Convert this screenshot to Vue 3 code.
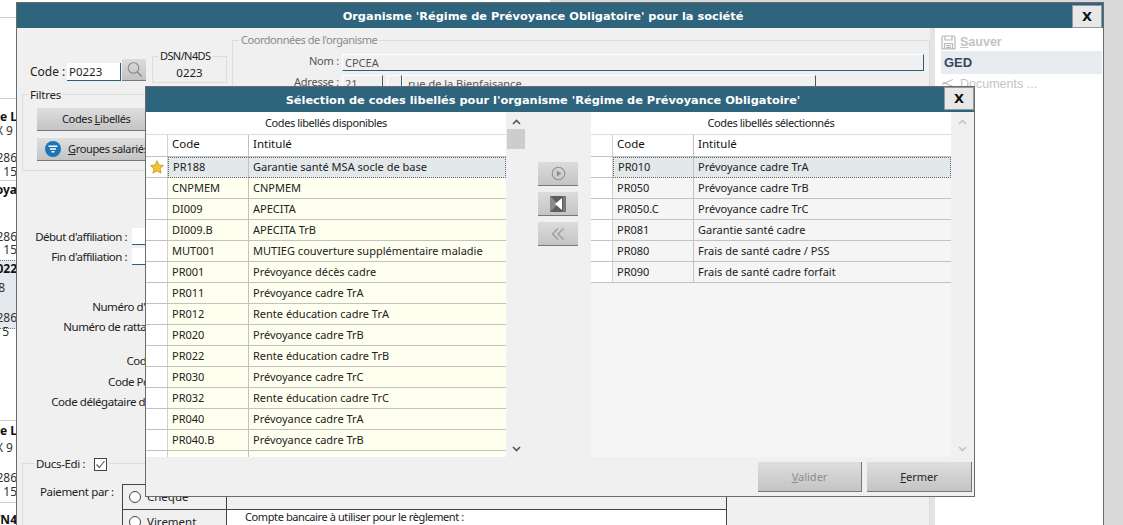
<script setup>
const strip = [
  { t: 98, h: 82, lines: [['de L', 116, 1], ['X 9', 130, 0, 4], ['286', 157], ['15', 171]] },
  { t: 180, h: 80, lines: [['oya', 189, 1], ['286', 236], ['15', 249]] },
  { t: 260, h: 69, sel: true, lines: [['022', 268, 1], ['8', 287, 0, 12], ['286', 317], ['15', 331, 0, 8]] },
  { t: 420, h: 82, lines: [['de L', 430, 1], ['X 9', 447, 0, 4], ['286', 477], ['15', 491]] },
  { t: 502, h: 23, lines: [['/N4', 519, 1]] }
]
const leftRows = [
  ['PR188', 'Garantie santé MSA socle de base'],
  ['CNPMEM', 'CNPMEM'],
  ['DI009', 'APECITA'],
  ['DI009.B', 'APECITA TrB'],
  ['MUT001', 'MUTIEG couverture supplémentaire maladie'],
  ['PR001', 'Prévoyance décès cadre'],
  ['PR011', 'Prévoyance cadre TrA'],
  ['PR012', 'Rente éducation cadre TrA'],
  ['PR020', 'Prévoyance cadre TrB'],
  ['PR022', 'Rente éducation cadre TrB'],
  ['PR030', 'Prévoyance cadre TrC'],
  ['PR032', 'Rente éducation cadre TrC'],
  ['PR040', 'Prévoyance cadre TrA'],
  ['PR040.B', 'Prévoyance cadre TrB'],
  ['PR042', 'Rente éducation cadre TrA']
]
const rightRows = [
  ['PR010', 'Prévoyance cadre TrA'],
  ['PR050', 'Prévoyance cadre TrB'],
  ['PR050.C', 'Prévoyance cadre TrC'],
  ['PR081', 'Garantie santé cadre'],
  ['PR080', 'Frais de santé cadre / PSS'],
  ['PR090', 'Frais de santé cadre forfait']
]
const midRows = [
  ["Numéro d'affiliation :", 33],
  ['Numéro de rattachement :', 3],
  ['Code interne :', 17],
  ['Code Population :', 4],
  ['Code délégataire de gestion :', 3]
]
</script>

<template>
  <div class="desktop">
    <div class="topstrip"></div>
    <div class="rightstrip"></div>

    <div class="strip">
      <div class="topline"></div>
      <div v-for="(c, i) in strip" :key="i" class="card" :class="{ sel: c.sel }" :style="{ top: c.t + 'px', height: c.h + 'px' }">
        <span v-for="(l, j) in c.lines" :key="j" class="cardline" :class="{ bold: l[2] }" :style="{ top: l[1] - c.t - 8 + 'px', right: (l[3] || 0) + 'px' }">{{ l[0] }}</span>
      </div>
    </div>

    <section class="window main">
      <header class="titlebar">
        <h1>Organisme 'Régime de Prévoyance Obligatoire' pour la société</h1>
        <button class="close">X</button>
      </header>
      <div class="mainbody">
        <div class="form">
          <div class="formtop">
            <div class="leftcol">
              <div class="coderow">
                <label class="codelabel">Code :</label>
                <div class="input codeinput">P0223</div>
                <button class="searchbtn">
                  <svg width="17" height="17" viewBox="0 0 17 17" fill="none" stroke="#8a8a8a" stroke-width="1.1">
                    <circle cx="7.5" cy="7" r="5.3" />
                    <path d="M11.3 10.8 15.5 15.5" stroke-width="1.4" />
                  </svg>
                </button>
                <div class="group dsn">
                  <span class="legend dsnlegend">DSN/N4DS</span>
                  <span class="dsnvalue">0223</span>
                </div>
              </div>
              <div class="group filtres">
                <span class="legend filtreslegend">Filtres</span>
                <button class="gbtn center"><span>Codes <u>L</u>ibellés</span></button>
                <button class="gbtn icon">
                  <svg width="16" height="16" viewBox="0 0 16 16">
                    <circle cx="8" cy="8" r="8" fill="#1c75b5" />
                    <path d="M3.5 5.2h9M5 8h6M6.5 10.8h3" stroke="#fff" stroke-width="1.4" />
                  </svg>
                  <span><u>G</u>roupes salariés</span>
                </button>
              </div>
              <div class="affil">
                <div class="frow"><label>Début d'affiliation :</label><div class="input dateinput"></div></div>
                <div class="frow"><label>Fin d'affiliation :</label><div class="input dateinput"></div></div>
              </div>
              <div class="numbers">
                <div v-for="r in midRows" :key="r[0]" class="nrow" :style="{ marginTop: r[1] + 'px' }">{{ r[0] }}</div>
              </div>
            </div>
            <div class="group coords">
              <span class="legend coordslegend">Coordonnées de l'organisme</span>
              <div class="crow first"><label>Nom :</label><div class="cinput nom">CPCEA</div></div>
              <div class="crow"><label>Adresse :</label><div class="cinput num">21</div><div class="cinput bis"></div><div class="cinput rue">rue de la Bienfaisance</div></div>
            </div>
          </div>
          <div class="group ducs">
            <div class="legend ducslegend">
              <span>Ducs-Edi :</span>
              <svg class="check" width="13" height="13" viewBox="0 0 13 13" fill="#fff" stroke="#444">
                <rect x=".5" y=".5" width="12" height="12" />
                <path d="M2.5 6.5 5.3 9.5 10.5 3" fill="none" stroke="#555" stroke-width="1.1" />
              </svg>
            </div>
            <div class="payrow">
              <label>Paiement par :</label>
              <div class="paytable">
                <div class="paycell"><i class="radio"></i>Chèque</div>
                <div class="paycell"></div>
                <div class="paycell"><i class="radio"></i>Virement</div>
                <div class="paycell compte">Compte bancaire à utiliser pour le règlement :</div>
              </div>
            </div>
          </div>
        </div>
        <aside class="side">
          <div class="sideitem sauver">
            <svg width="15" height="15" viewBox="0 0 15 15" fill="none" stroke="#b8b8b8" stroke-width="1.2">
              <path d="M1 2.2 2.2 1h10.6L14 2.2v11.6H1z" />
              <path d="M4 1v4h7V1M3.5 14V8.5h8V14M5 10.5h5M5 12.3h5" />
            </svg>
            <span><u>S</u>auver</span>
          </div>
          <div class="ged">GED</div>
          <div class="sideitem docs">
            <svg width="15" height="15" viewBox="0 0 15 15" fill="none" stroke="#bbb" stroke-width="1.1">
              <path d="M1 7.5 12 2.5M2 5.5 11 9M1 9.5h13v3.5H1z" />
            </svg>
            <span>Documents ...</span>
          </div>
        </aside>
      </div>
    </section>

    <section class="window dialog">
      <header class="titlebar dtitle">
        <h2>Sélection de codes libellés pour l'organisme 'Régime de Prévoyance Obligatoire'</h2>
        <button class="close dclose">X</button>
      </header>
      <div class="dbody">
        <div class="panel left">
          <div class="ptitle">Codes libellés disponibles</div>
          <div class="grid">
            <div class="row head"><div class="c0"></div><div class="c1">Code</div><div class="c2">Intitulé</div></div>
            <div v-for="(r, i) in leftRows" :key="r[0]" class="row yellow" :class="{ selected: i === 0, cut: i === 14 }">
              <div class="c0">
                <svg v-if="i === 0" width="14" height="14" viewBox="0 0 14 14">
                  <path d="M7 .8 8.9 5l4.6.5-3.4 3.1 1 4.6L7 10.9l-4.1 2.3 1-4.6L.5 5.5 5.1 5z" fill="#f5c431" stroke="#b98d1c" stroke-width=".7" />
                </svg>
              </div>
              <div class="c1">{{ r[0] }}</div>
              <div class="c2">{{ r[1] }}</div>
            </div>
          </div>
        </div>
        <div class="gutter">
          <div class="scrollbar">
            <svg class="arrow" width="9" height="6" viewBox="0 0 9 6" fill="none" stroke="#555" stroke-width="1.6"><path d="M1 5 4.5 1.5 8 5" /></svg>
            <div class="thumb"></div>
            <svg class="arrow down" width="9" height="6" viewBox="0 0 9 6" fill="none" stroke="#555" stroke-width="1.6"><path d="M1 1 4.5 4.5 8 1" /></svg>
          </div>
          <div class="moves">
            <button class="mbtn">
              <svg width="15" height="15" viewBox="0 0 15 15" fill="none" stroke="#8f8f8f" stroke-width="1.1"><circle cx="7.5" cy="7.5" r="6.3" /><path d="M5.8 4.6v5.8l4.6-2.9z" fill="#8f8f8f" stroke="none" /></svg>
            </button>
            <button class="mbtn">
              <svg width="16" height="16" viewBox="0 0 16 16"><rect width="16" height="16" fill="#5d5d5d" /><path d="M0 16 8 8 0 0z" fill="#8a8a8a" /><path d="M12 2v12L5 8z" fill="#fff" /><rect x="13" y="0" width="3" height="16" fill="#777" /></svg>
            </button>
            <button class="mbtn">
              <svg width="14" height="14" viewBox="0 0 14 14" fill="none" stroke="#9a9a9a" stroke-width="1.2"><path d="M7 1.5 1.5 7 7 12.5M12.5 1.5 7 7l5.5 5.5" /></svg>
            </button>
          </div>
        </div>
        <div class="panel right">
          <div class="ptitle">Codes libellés sélectionnés</div>
          <div class="grid">
            <div class="row head"><div class="c0"></div><div class="c1">Code</div><div class="c2">Intitulé</div></div>
            <div v-for="(r, i) in rightRows" :key="r[0]" class="row plain" :class="{ selected: i === 0 }">
              <div class="c0"></div>
              <div class="c1">{{ r[0] }}</div>
              <div class="c2">{{ r[1] }}</div>
            </div>
          </div>
        </div>
        <div class="rscroll">
          <svg width="9" height="6" viewBox="0 0 9 6" fill="none" stroke="#c4c4c4" stroke-width="1.6"><path d="M1 5 4.5 1.5 8 5" /></svg>
          <svg width="9" height="6" viewBox="0 0 9 6" fill="none" stroke="#c4c4c4" stroke-width="1.6"><path d="M1 1 4.5 4.5 8 1" /></svg>
        </div>
      </div>
      <footer class="dfoot">
        <button class="gbtn fbtn disabled"><span><u>V</u>alider</span></button>
        <button class="gbtn fbtn fermer"><span><u>F</u>ermer</span></button>
      </footer>
    </section>
  </div>
</template>

<style>
html, body { margin: 0; padding: 0; overflow: hidden; background: #fff; }
</style>

<style scoped>
.desktop { position: relative; width: 1123px; height: 525px; overflow: hidden; background: #fff; font: 11px/14px "Noto Sans", sans-serif; color: #222; }
.topstrip { position: absolute; left: 550px; right: 0; top: 0; height: 4px; background: #d9d9d9; }
.rightstrip { position: absolute; left: 1104px; right: 0; top: 0; bottom: 0; background: #d9d9d9; }
.strip { position: absolute; left: 0; top: 0; width: 17px; height: 525px; overflow: hidden; }
.topline { position: absolute; left: 0; right: 0; top: 17px; border-top: 1px solid #cfcfcf; }
.card { position: absolute; left: 0; right: 0; box-sizing: border-box; border-top: 1px solid #cfcfcf; }
.card.sel { background: #e4e9ee; border-top: 1px dotted #777; border-bottom: 1px dotted #777; }
.cardline { position: absolute; right: 0; white-space: nowrap; font-size: 12px; line-height: 16px; color: #333; }
.cardline.bold { font-weight: 700; color: #111; }

.window { position: absolute; box-sizing: border-box; border: 1px solid #6b6b6b; display: flex; flex-direction: column; background: #f0f0f0; overflow: hidden; }
.main { left: 16px; top: 2px; width: 1088px; height: 540px; }
.dialog { left: 145px; top: 86px; width: 830px; height: 411px; }
.titlebar { position: relative; flex: none; height: 25px; background: #2e647c; color: #fff; display: flex; align-items: center; justify-content: center; }
h1, h2 { margin: 0; font: 700 11.35px/16px "DejaVu Sans", sans-serif; }
h1 { margin-right: 34px; }
h2 { margin-right: 34px; }
.close { position: absolute; right: 1px; top: 2px; width: 30px; height: 23px; padding: 0; box-sizing: border-box; border: 1px solid #8c9aa1; background: #e8e8e8; color: #111; font: 700 13px/20px "DejaVu Sans", sans-serif; }
.dclose { right: 0; top: 0; }

.mainbody { flex: 1; display: flex; min-height: 0; }
.form { width: 917px; flex: none; position: relative; }
.formtop { display: flex; height: 433px; }
.leftcol { width: 215px; flex: none; }
.group { position: relative; box-sizing: border-box; border: 1px solid #dcdcdc; }
.legend { position: absolute; background: #f0f0f0; padding: 0 2px; white-space: nowrap; }
.coderow { display: flex; align-items: flex-start; height: 54px; padding: 28px 0 0 13px; box-sizing: border-box; font-size: 12px; }
.codelabel { width: 37px; margin-top: 9px; }
.input { background: #fff; border-bottom: 1px solid #2c5f7d; box-sizing: border-box; }
.codeinput { width: 54px; height: 18px; margin-top: 7px; padding: 2px 2px 0; font-size: 11.5px; border-right: 1px solid #2c5f7d; }
.searchbtn { width: 24px; height: 22px; margin: 3px 0 0 1px; padding: 0; border: none; border-bottom: 1px solid #777; background: linear-gradient(#dcdcdc, #c2c2c2); display: flex; align-items: center; justify-content: center; }
.dsn { width: 75px; height: 27px; margin-left: 6px; display: flex; justify-content: center; }
.dsnlegend { left: 5px; top: -8px; font-size: 11px; letter-spacing: -.6px; }
.dsnvalue { margin-top: 9px; font-size: 11.5px; }
.filtres { width: 205px; height: 77px; margin: 12px 0 0 5px; padding: 13px 0 0 14px; display: flex; flex-direction: column; gap: 7px; }
.filtreslegend { left: 5px; top: -7px; font-size: 11.5px; letter-spacing: -.2px; }
.gbtn { box-sizing: border-box; padding: 0; border: none; border-bottom: 1px solid #777; background: linear-gradient(#dedede, #c4c4c4); font: 11px/14px "Noto Sans", sans-serif; color: #222; }
.filtres .gbtn { width: 170px; height: 23px; display: flex; align-items: center; letter-spacing: -.35px; }
.gbtn.center { padding-left: 25px; }
.gbtn.icon { padding-left: 8px; gap: 7px; }
.affil { margin-top: 57px; display: flex; flex-direction: column; gap: 3px; }
.frow { display: flex; height: 17px; align-items: center; }
.frow label { width: 110px; text-align: right; font-size: 11.5px; letter-spacing: -.5px; white-space: nowrap; }
.dateinput { width: 100px; height: 17px; margin-left: 5px; }
.numbers { margin-top: 0; font-size: 11.5px; letter-spacing: -.45px; }
.nrow { width: 179px; text-align: right; white-space: nowrap; line-height: 17px; }
.coords { width: 698px; height: 426px; margin-top: 12px; padding-top: 7px; }
.coordslegend { left: 6px; top: -8px; font-size: 11px; color: #8a8a8a; letter-spacing: -.45px; }
.crow { display: flex; height: 17px; margin-top: 4px; }
.crow.first { margin-top: 6px; }
.crow label { width: 106px; text-align: right; padding-right: 3px; box-sizing: content-box; color: #555; font-size: 11px; letter-spacing: -.2px; }
.cinput { background: #f0f0f0; border-top: 1px solid #fff; border-bottom: 1px solid #2c5f7d; border-right: 1px solid #2c5f7d; border-left: 1px solid #fff; box-sizing: border-box; padding-left: 2px; color: #555; font-size: 11px; line-height: 15px; }
.nom { width: 582px; }
.num { width: 41px; }
.bis { width: 15px; margin-left: 4px; }
.rue { width: 414px; margin-left: 0; padding-left: 5px; }
.ducs { width: 908px; height: 80px; margin: 2px 0 0 5px; border-bottom: none; padding: 21px 0 0 17px; }
.ducslegend { left: 11px; top: -7px; display: flex; align-items: center; gap: 9px; font-size: 11.5px; letter-spacing: -.35px; }
.payrow { display: flex; font-size: 11.5px; letter-spacing: -.35px; }
.payrow label { width: 82px; padding-top: 0; white-space: nowrap; }
.paytable { width: 605px; display: grid; grid-template-columns: 104px 1fr; grid-template-rows: 25px 25px; border: 1px solid #444; box-sizing: border-box; margin-top: -1px; letter-spacing: 0; }
.paycell { display: flex; align-items: center; gap: 6px; padding-left: 6px; border-bottom: 1px solid #444; }
.paycell:nth-child(odd) { border-right: 1px solid #444; }
.paycell.compte { background: #fff; padding-left: 18px; align-items: flex-start; font-size: 11px; letter-spacing: -.4px; }
.radio { width: 12px; height: 12px; box-sizing: border-box; border: 1px solid #444; border-radius: 50%; background: #fff; }
.side { flex: 1; background: #fff; padding: 5px 1px 0 6px; border-left: 5px solid #e4e4e4; margin-left: -4px; }
.sideitem { display: flex; align-items: center; gap: 4px; height: 18px; font: 700 12.5px/16px "Liberation Sans", sans-serif; color: #c4c4c4; }
.sauver { margin-left: 0; }
.ged { height: 23px; margin-top: 0; padding-left: 3px; background: #e8ebef; color: #33495f; font: 700 13px/23px "Liberation Sans", sans-serif; }
.docs { margin-top: 1px; font-weight: 400; margin-left: 0; }

.dbody { position: relative; display: flex; height: 345px; background: #f0f0f0; }
.panel { flex: none; background: #fff; display: flex; flex-direction: column; }
.panel.left { width: 360px; }
.panel.right { width: 360px; background: #f5f5f5; }
.ptitle { height: 22px; background: #fff; text-align: center; line-height: 21px; flex: none; font-size: 11px; letter-spacing: -.4px; }
.grid { flex: 1; overflow: hidden; }
.row { display: flex; height: 21px; box-sizing: border-box; border-bottom: 1px solid #c2c2c2; line-height: 20px; }
.row.head { height: 23px; background: #fff; border-top: 1px solid #dcdcdc; border-bottom: 1px solid #c2c2c2; font-size: 11.5px; line-height: 18px; color: #111; }
.row.cut { line-height: 25px; }
.c0 { width: 22px; flex: none; background: #fff; box-sizing: border-box; border-right: 1px solid #d0d0d0; display: flex; align-items: center; justify-content: center; }
.c1 { width: 81px; flex: none; box-sizing: border-box; padding-left: 4px; border-right: 1px solid #c2c2c2; }
.c2 { flex: 1; padding-left: 4px; white-space: nowrap; overflow: hidden; }
.yellow .c1, .yellow .c2 { background: #fffff0; }
.plain .c1, .plain .c2 { background: #f5f5f5; }
.row.selected .c1, .row.selected .c2 { background: #e3e8ea; border-top: 1px dotted #666; border-bottom: 1px dotted #666; margin-bottom: -1px; line-height: 18px; }
.row.selected .c2 { border-right: 1px dotted #666; }
.row.selected .c1 { border-left: 1px dotted #666; border-right: 1px solid #c2c2c2; padding-left: 4px; }
.gutter { position: relative; width: 85px; flex: none; display: flex; }
.scrollbar { position: absolute; left: 1px; top: 0; bottom: 0; width: 18px; display: flex; flex-direction: column; align-items: center; }
.arrow { margin-top: 7px; flex: none; }
.thumb { width: 18px; height: 20px; margin-top: 4px; background: #cdcdcd; }
.arrow.down { margin-top: auto; margin-bottom: 5px; }
.moves { margin: 50px 0 0 32px; display: flex; flex-direction: column; gap: 6px; }
.mbtn { width: 40px; height: 24px; padding: 0; border: none; border-bottom: 1px solid #777; background: linear-gradient(#dcdcdc, #c4c4c4); display: flex; align-items: center; justify-content: center; }
.rscroll { width: 23px; flex: none; display: flex; flex-direction: column; align-items: center; justify-content: space-between; padding: 7px 0 5px; box-sizing: border-box; }
.dfoot { flex: 1; display: flex; justify-content: flex-end; gap: 5px; padding: 5px 2px 0 0; }
.fbtn { height: 30px; border-bottom: 1px solid #777; border-right: 1px solid #777; }
.disabled { width: 104px; color: #8c8c8c; }
.fermer { width: 105px; }
</style>
